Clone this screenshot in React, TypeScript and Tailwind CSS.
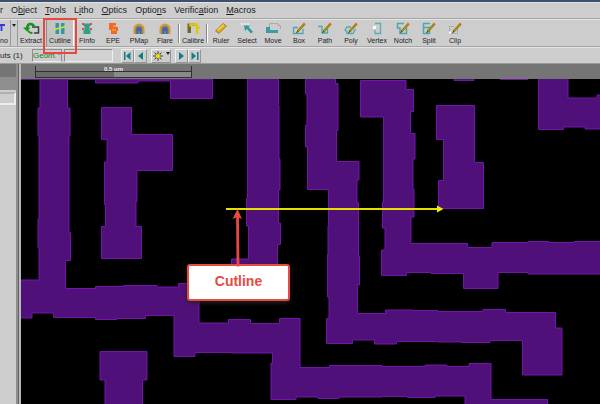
import React from "react";

const menus = ["Object", "Tools", "Litho", "Optics", "Options", "Verification", "Macros"];
const mnemonic: Record<string, number> = { Object: 1, Tools: 0, Litho: 1, Optics: 0, Options: 5, Verification: 7, Macros: 0 };

const Pencil = () => (
  <g>
    <path d="M5.5 9.5 L12 2.5" stroke="#8a7a10" strokeWidth="2.4" />
    <path d="M6 9 L11.5 3" stroke="#b5a012" strokeWidth="1" />
    <path d="M11.4 3 L12.8 1.4" stroke="#e0662c" strokeWidth="2.4" />
    <path d="M4.5 10.8 L6 9.2" stroke="#4d4a30" strokeWidth="1.2" />
  </g>
);

const Rainbow = () => (
  <g>
    <path d="M1.5 12 V7 a5.5 5.5 0 0 1 11 0 V12 z" fill="#d89a2b" />
    <path d="M3.5 12 V7.5 a3.5 3.5 0 0 1 7 0 V12 z" fill="#467fa0" />
    <path d="M4.8 12 V8 a2.2 2.2 0 0 1 4.4 0 V12 z" fill="#6a4f9b" />
    <rect x="6" y="9" width="2" height="3" fill="#35a08c" />
  </g>
);

const glyphs: Record<string, React.ReactNode> = {
  Extract: (
    <g fill="none">
      <path d="M8 5 H14.5 V11 H10" stroke="#3d3d3d" strokeWidth="1.5" />
      <path d="M10 4.5 C8 .5 3.5 1.5 3 6" stroke="#17941c" strokeWidth="2.6" />
      <path d="M-1 5.5 H6.5 L3 9.5 z" fill="#17941c" />
      <path d="M4 8.5 Q5 11 8.5 11" stroke="#17941c" strokeWidth="2" />
    </g>
  ),
  Cutline: (
    <g>
      <path d="M2.5 1 H6 V12 H2.5 z M8 1 H11.5 V12 H8 z" fill="#2f9aa0" />
      <path d="M1 7.5 L13 4.5" stroke="#d9dd4a" strokeWidth="1.3" />
    </g>
  ),
  FInfo: (
    <g>
      <path d="M3.5 1.5 H10.5 V4 H9.5 V8 H10.5 V12 H3.5 V8 H4.5 V4 H3.5 z" fill="#2fa084" />
      <path d="M2 1 H4 V3 H2 z M10 1 H12 V3 H10 z M2 6 H4 V8 H2 z M10 6 H12 V8 H10 z" fill="#d0544b" />
    </g>
  ),
  EPE: (
    <g>
      <path d="M3 1 H10 V5 H12 V9 H11 V12 H5 V8 H3 z" fill="#f2672a" />
      <path d="M7 4 H10 M6 8 H10" stroke="#f9a13a" strokeWidth="1.5" />
    </g>
  ),
  PMap: <Rainbow />,
  Flare: <Rainbow />,
  Calibre: (
    <g>
      <path d="M1.5 1.5 H9 V4 H5 V11 H1.5 z" fill="#6b6b24" />
      <path d="M4.5 4.5 V2.5 H11 V12" stroke="#dcc914" strokeWidth="2.6" fill="none" />
      <path d="M10 5.5 H14" stroke="#dcc914" strokeWidth="2" />
    </g>
  ),
  Ruler: (
    <g>
      <path d="M1.5 9 L9 1.5 L12.5 4 L5 11.5 z" fill="#e0a91d" stroke="#9a741a" strokeWidth=".8" />
      <path d="M4 8 L10 2.8" stroke="#f6dc5a" strokeWidth="1.2" />
    </g>
  ),
  Select: (
    <g>
      <path d="M1 2 H9 V6" stroke="#f4f4f4" strokeWidth="1.4" fill="none" strokeDasharray="2 1" />
      <path d="M4 3.5 H10.5 L8.7 5.3 L13 9.8 L11 11.5 L7 7 L5 9 z" fill="#2f9aa0" />
    </g>
  ),
  Move: (
    <g>
      <path d="M3.5 5 V1.5 H12 V3.5 H14.5 V7" fill="none" stroke="#999" strokeWidth="1" strokeDasharray="1.3 .8" />
      <path d="M0 5 H4 V8 H12 V11 H0 z" fill="#3c9ca4" />
    </g>
  ),
  Box: (
    <g>
      <path d="M6 5.5 H1.5 V11.5 H11 V7" stroke="#4ea7b0" strokeWidth="1.3" fill="none" />
      <Pencil />
    </g>
  ),
  Path: (
    <g>
      <path d="M0 4.5 H4 V11 H9.5 V6.5" stroke="#4ea7b0" strokeWidth="1.3" fill="none" />
      <Pencil />
    </g>
  ),
  Poly: (
    <g>
      <path d="M7 5 H3 L1 8 L3 9.5 V11.5 H9 L11.5 7" stroke="#4ea7b0" strokeWidth="1.3" fill="none" />
      <Pencil />
    </g>
  ),
  Vertex: (
    <g>
      <path d="M5 1.5 H10.5 V11.5 H5 V8" stroke="#56aeb8" strokeWidth="1.3" fill="none" />
      <rect x="3" y="4" width="3" height="3" fill="#fff" />
    </g>
  ),
  Notch: (
    <g>
      <path d="M8 1.5 H1.5 V6 H4 V11.5 H10.5 V6" stroke="#4ea7b0" strokeWidth="1.5" fill="none" />
      <Pencil />
    </g>
  ),
  Split: (
    <g>
      <path d="M8 1.5 H1.5 V11.5 H7.5 V8 M1.5 5.5 H8" stroke="#4ea7b0" strokeWidth="1.5" fill="none" />
      <Pencil />
    </g>
  ),
  Clip: (
    <g>
      <path d="M1 4.5 H6 M1.5 4 V11 M9.5 7 V11.5 H2" stroke="#999" strokeWidth="1" fill="none" strokeDasharray="1.3 .8" />
      <rect x="1" y="9.5" width="2" height="2" fill="#fff" />
      <Pencil />
    </g>
  ),
};

function Tool({ name, active = false }: { name: string; active?: boolean }) {
  return (
    <div className={active ? "relative w-7 shrink-0" : "relative w-[26px] shrink-0"}>
      <button
        type="button"
        className={
          "flex h-[26px] w-full flex-col items-center gap-px pt-0.5 text-[7px] leading-[10px] " +
          (active ? "border-x border-l-[#8c8c8c] border-r-white bg-[#c4c4c4]" : "")
        }
      >
        <svg viewBox="0 0 14 13" className="h-[13px] w-[14px] shrink-0 overflow-visible" aria-hidden="true">
          {glyphs[name]}
        </svg>
        <span className="whitespace-nowrap">{name}</span>
      </button>
      {active && <span className="pointer-events-none absolute -inset-x-[3px] -top-0.5 z-10 h-9 border-2 border-[#e9463c]" />}
    </div>
  );
}

const Separator = () => <span className="h-[19px] w-0.5 shrink-0 border-l border-r border-l-[#888] border-r-white" />;

function NavButton({ label, d }: { label: string; d: string }) {
  return (
    <button
      type="button"
      aria-label={label}
      className="flex h-[14px] w-[13px] items-center justify-center border border-b-[#969696] border-l-[#eee] border-r-[#969696] border-t-[#eee]"
    >
      <svg viewBox="0 0 9 8" className="h-2 w-[9px]">
        <path d={d} fill="#147f83" />
      </svg>
    </button>
  );
}

const shapes = [
  "M40 76V108H38V136H39V219H38V248H39V280H18V318H32V313H53.5V317.5H95.5V319.5H117V318.5H145.5V315.5H174V356.5H195V352.5H232V353H272.5V363H271V399.5H296V397H318V398.5H339V397H382V396.5H407.5V397.5H435V396H465V408H547.5V399.5H491V363.5H469V366.5H447V365H425V366.5H382V365.5H329.5V367.5H300V318.5H279.5V323.5H250.5V319.5H228.5V323H199V283.5H178.5V287H157V285.5H123V286.5H95.5V288.5H65.5V260.5H70.5V232.5H69V136H70V108H67.5V76Z",
  "M95.5 76V83H138V81H170.5V98.5H212.5V76Z",
  "M101.5 107.5H131.5V134.5H172.5V170.5H137V201.5H136V226.5H141.5V258.5H101.5V226.5H105.5V204.5H104.5V162H107V139.5H101.5Z",
  "M247.5 76V198.5H246.5V226H248.5V259H231.5V272H277.5V244.5H280.5V223H278.5V190H280V159H279V105H278.5V76Z",
  "M305.5 76V94H307V125H305.5V147H307.5V189.5H328.5V226H328V254.5H327.5V297H329V318.5H326.5V343.5H352.5V340H374.5V344H396.5V341.5H437.5V342H462V342.5H490V340.5H522.5V375H562V328H555.5V312.5H505.5V309.5H483V311.5H438V310.5H413V310H385.5V313.5H357.5V285H359.5V256H358.5V202.5H357V180H359V161.5H336.5V130.5H338V83.5H335.5V76Z",
  "M360.5 80.5V117H383.5V202H382.5V228H385V250H381.5V275.5H406.5V272.5H431V273.5H463.5V288.5H498V272.5H528V274H604V241.5H574V242.5H549V241.5H528V242.5H492V247.5H467.5V243.5H411V217H414V189H413V159H415V133.5H410.5V111.5H413.5V89.5H406V80.5Z",
  "M436.5 105.5H474.5V162.5H483.5V208.5H438.5V180.5H443.5V139.5H436.5Z",
  "M538.5 76V129.5H563.5V127H585V129H604V95H597V98H568V76Z",
  "M100 351.5H147V380H142.5V408H105V380H100Z",
  "M454 76V80.5H474V76Z",
  "M500.5 76V79.5H528V76Z",
];

function LayoutView() {
  return (
    <main className="relative min-h-[325px] flex-1 overflow-hidden bg-black">
      <svg className="absolute inset-0 h-full w-full" aria-label="Layout">
        <g transform="translate(-21 -79)">
          {shapes.map((d) => (
            <path key={d} d={d} fill="#501079" stroke="#7216a8" strokeWidth="1" />
          ))}
          <path d="M21 79.5H212" stroke="#5c1a85" />
          <path d="M226 209H438" stroke="#e6e000" strokeWidth="2" />
          <path d="M437 205.5L443.5 209L437 212.5Z" fill="#f4ee00" />
        </g>
      </svg>
      <div className="absolute left-[166px] top-[185px] flex h-[37px] w-[103px] items-center justify-center rounded-[3px] border-2 border-[#e84a41] bg-white pb-0.5 text-[14px] font-bold text-[#e84a41] shadow-[0_2px_4px_#222]">
        Cutline
      </div>
      <svg viewBox="0 0 10 60" className="absolute left-[211px] top-[129px] h-[60px] w-2.5" aria-hidden="true">
        <path d="M6 58.5L5.5 7" stroke="#e84a41" strokeWidth="2.8" />
        <path d="M.5 11L5.5 1L10 11L5.5 9Z" fill="#e84a41" />
      </svg>
    </main>
  );
}

export default function App() {
  return (
    <div className="flex min-h-screen flex-col overflow-hidden bg-[#cdcdcd] font-['Liberation_Sans',Arial,sans-serif] text-[#1c1c1c]">
      <div className="h-0.5 bg-[#3c506b]" />
      <nav className="flex h-[17px] items-center gap-2 border-b border-[#a6a6a6] border-t border-t-[#e4e4e4] text-[9px] leading-none">
        <span>r</span>
        {menus.map((m) => {
          const i = mnemonic[m];
          return (
            <button key={m} type="button" className="whitespace-nowrap leading-[11px]">
              {m.slice(0, i)}
              <span className="underline underline-offset-1">{m[i]}</span>
              {m.slice(i + 1)}
            </button>
          );
        })}
      </nav>

      <div className="flex h-7 items-center border-b border-[#a6a6a6] border-t border-t-[#e4e4e4]">
        <button type="button" className="flex h-[26px] w-[11px] shrink-0 flex-col items-start gap-px border-r border-[#999] pt-0.5 text-[7px] leading-[10px]">
          <svg viewBox="0 0 6 13" className="h-[13px] w-1.5 shrink-0" aria-hidden="true">
            <path d="M0 3H5M1.5 3V9" stroke="#3438d8" strokeWidth="1.8" />
          </svg>
          <span>no</span>
        </button>
        <button type="button" aria-label="More" className="flex h-[26px] w-[7px] shrink-0 justify-center border-r border-[#999] pt-1">
          <svg viewBox="0 0 4 3" className="h-[3px] w-1"><path d="M0 0H4L2 3Z" fill="#222" /></svg>
        </button>
        <Tool name="Extract" />
        <span className="w-0.5 shrink-0" />
        <Tool name="Cutline" active />
        <Tool name="FInfo" />
        <Tool name="EPE" />
        <Tool name="PMap" />
        <Tool name="Flare" />
        <Separator />
        <Tool name="Calibre" />
        <Separator />
        {["Ruler", "Select", "Move", "Box", "Path", "Poly", "Vertex", "Notch", "Split", "Clip"].map((n) => (
          <Tool key={n} name={n} />
        ))}
      </div>

      <div className="flex h-[17px] items-center border-b border-[#9a9a9a] border-t border-t-[#e4e4e4] text-[8px] leading-none">
        <span className="w-8 shrink-0 whitespace-nowrap">uts (1)</span>
        <div className="flex h-[13px] w-[30px] shrink-0 border border-b-[#eee] border-l-[#8d8d8d] border-r-[#8d8d8d] border-t-[#8d8d8d]">
          <select aria-label="Object type" className="w-[23px] appearance-none overflow-hidden bg-transparent text-[8px] leading-[11px] text-[#1f7d1f]">
            <option>Geom.</option>
          </select>
          <svg viewBox="0 0 4 3" className="mt-0.5 ml-px h-[3px] w-1"><path d="M0 0H4L2 3Z" fill="#222" /></svg>
        </div>
        <input aria-label="Filter" className="ml-0.5 h-[13px] w-[49px] border border-b-[#eee] border-l-[#8d8d8d] border-r-[#eee] border-t-[#8d8d8d] bg-[#d2d2d2] px-0.5" />
        <div className="ml-2 flex items-center">
          <NavButton label="First" d="M1 0H2.5V8H1ZM7.5 0V8L3 4Z" />
          <NavButton label="Previous" d="M7 0V8L2 4Z" />
        </div>
        <button type="button" aria-label="Highlight" className="ml-1 flex h-[14px] w-5 items-start gap-0.5 border border-b-[#969696] border-l-[#eee] border-r-[#969696] border-t-[#eee]">
          <svg viewBox="0 0 12 12" className="h-3 w-3">
            <path d="M6 1V11M1 6H11M2.5 2.5L9.5 9.5M9.5 2.5L2.5 9.5" stroke="#333" strokeWidth=".9" />
            <circle cx="6" cy="6" r="2.6" fill="#ecd91c" stroke="#6a6220" strokeWidth=".6" />
          </svg>
          <svg viewBox="0 0 4 3" className="mt-0.5 h-[3px] w-1 shrink-0"><path d="M0 0H4L2 3Z" fill="#222" /></svg>
        </button>
        <div className="ml-1 flex items-center">
          <NavButton label="Next" d="M2 0V8L7 4Z" />
          <NavButton label="Last" d="M7 0H8.5V8H7ZM1.5 0V8L6 4Z" />
        </div>
      </div>

      <div className="flex flex-1">
        <aside className="flex w-4 shrink-0 flex-col">
          <div className="h-[13px] bg-[#757575]" />
          <div className="h-[13px] bg-[#8f8f8f]" />
          <div className="mt-0.5 h-[13px] border-2 border-l-0 border-[#ededed] border-t-[#b0b0b0]" />
        </aside>
        <div className="w-[5px] shrink-0 border-l-2 border-r-2 border-l-[#8e8e8e] border-r-[#b9b9b9] bg-[#666]" />
        <section className="flex min-w-0 flex-1 flex-col">
          <div className="h-[15px] bg-[#757575] pt-0.5 pl-3.5">
            <div className="flex h-3 w-[157px] flex-col border-x border-[#303030]">
              <div className="h-[5px] text-center text-[6px] font-bold leading-[6px] text-[#eee]">0.5 um</div>
              <div className="flex flex-1 border-y border-[#303030]">
                <div className="w-1/2 bg-[#6a6a6a]" />
                <div className="w-1/2 bg-[#8a8a8a]" />
              </div>
            </div>
          </div>
          <LayoutView />
        </section>
      </div>
    </div>
  );
}
